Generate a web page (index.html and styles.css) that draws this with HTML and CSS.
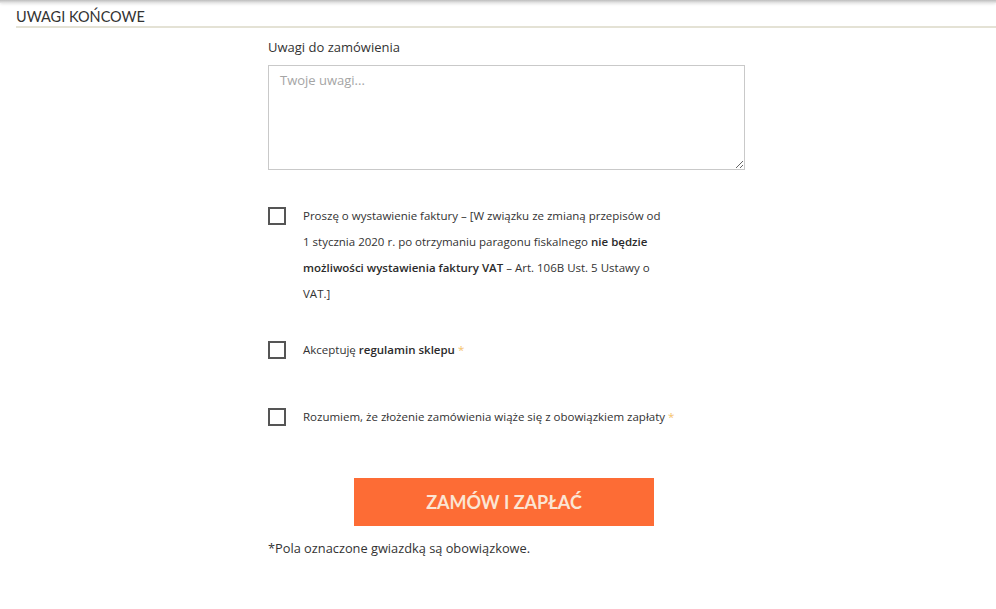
FILE: index.html
```html
<!DOCTYPE html>
<html lang="pl">
<head>
<meta charset="utf-8">
<title>Uwagi końcowe</title>
<link rel="stylesheet" href="styles.css">
</head>
<body>
<div class="topbar"></div>
<section class="section">
  <h2 class="section-title">UWAGI KOŃCOWE</h2>
  <div class="form-col">
    <label class="field-label" for="uwagi">Uwagi do zamówienia</label>
    <textarea id="uwagi" class="notes" placeholder="Twoje uwagi..."></textarea>

    <div class="check-row check-invoice">
      <span class="box"></span>
      <p class="check-text">Proszę o wystawienie faktury – [W związku ze zmianą przepisów od 1 stycznia 2020 r. po otrzymaniu paragonu fiskalnego <b>nie będzie możliwości wystawienia faktury VAT</b> – Art. 106B Ust. 5 Ustawy o VAT.]</p>
    </div>

    <div class="check-row check-terms">
      <span class="box"></span>
      <p class="check-text">Akceptuję <b>regulamin sklepu</b> <span class="req">*</span></p>
    </div>

    <div class="check-row check-pay">
      <span class="box"></span>
      <p class="check-text nowrap">Rozumiem, że złożenie zamówienia wiąże się z obowiązkiem zapłaty <span class="req">*</span></p>
    </div>

    <button class="submit" type="button">ZAMÓW I ZAPŁAĆ</button>
    <p class="footnote">*Pola oznaczone gwiazdką są obowiązkowe.</p>
  </div>
</section>
</body>
</html>
```
FILE: styles.css
```css
html, body {
  margin: 0;
  padding: 0;
  background: #fff;
}
body {
  font-family: "Open Sans", "Liberation Sans", sans-serif;
  color: #333;
}
.topbar {
  height: 3px;
  background: linear-gradient(#bdbdbd, #e9e9e9);
  box-shadow: 0 1px 3px rgba(0,0,0,0.12);
}
.section {
  padding-left: 16px;
}
.section-title {
  margin: 0;
  font-family: Lato, "Liberation Sans", sans-serif;
  font-weight: 400;
  font-size: 14.5px;
  line-height: 18px;
  padding-top: 5px;
  color: #333;
  border-bottom: 2px solid #e4e2d5;
  height: 18px;
}
.form-col {
  margin-left: 252px;
  width: 477px;
  display: flex;
  flex-direction: column;
}
.field-label {
  font-size: 13px;
  line-height: 18px;
  margin-top: 10px;
  color: #333;
}
.notes {
  box-sizing: border-box;
  margin-top: 9px;
  width: 477px;
  height: 105px;
  border: 1px solid #c9c9c9;
  border-radius: 0;
  padding: 5px 11px;
  font-family: "Open Sans", "Liberation Sans", sans-serif;
  font-size: 13px;
  color: #333;
  resize: vertical;
}
.notes::placeholder {
  color: #a5a5a5;
}
.check-row {
  display: flex;
  align-items: flex-start;
  gap: 17px;
}
.box {
  flex: none;
  box-sizing: border-box;
  width: 18px;
  height: 18px;
  border: 2px solid #555;
  margin-top: 4px;
}
.check-text {
  margin: 0;
  width: 362px;
  font-size: 11.5px;
  line-height: 26px;
  color: #333;
}
.check-text.nowrap {
  white-space: nowrap;
}
.check-text b {
  font-weight: 600;
  color: #2b2b2b;
}
.req {
  color: #f5c26b;
}
.check-invoice {
  margin-top: 33px;
}
.check-terms {
  margin-top: 30px;
}
.check-pay {
  margin-top: 41px;
}
.submit {
  align-self: flex-start;
  margin-left: 86px;
  margin-top: 48px;
  width: 300px;
  height: 48px;
  border: 0;
  background: #fd6c35;
  color: #fbe5d3;
  font-family: Lato, "Liberation Sans", sans-serif;
  font-weight: 700;
  font-size: 18px;
  cursor: pointer;
}
.footnote {
  margin: 13px 0 0;
  font-size: 12.8px;
  line-height: 18px;
  color: #333;
}
```
